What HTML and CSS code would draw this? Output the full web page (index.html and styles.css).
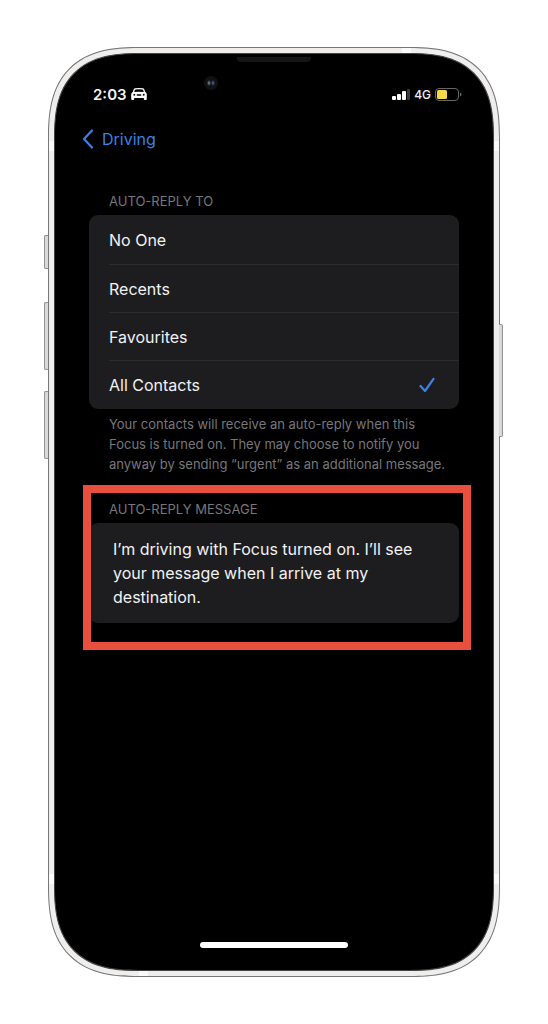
FILE: index.html
```html
<!DOCTYPE html>
<html lang="en">
<head>
    <meta charset="UTF-8">
    <meta name="viewport" content="width=device-width, initial-scale=1.0">
    <title>Driving Focus: Auto-Reply</title>
    <link rel="stylesheet" href="styles.css">
</head>
<body>
    <div class="phone">
        <span class="side-button mute"></span>
        <span class="side-button volume-up"></span>
        <span class="side-button volume-down"></span>
        <span class="side-button power"></span>
        <span class="band band-top"></span>
        <span class="band band-bottom"></span>
        <span class="band band-left-top"></span>
        <span class="band band-left-bottom"></span>
        <span class="band band-right-top"></span>
        <span class="band band-right-bottom"></span>

        <div class="screen">
            <span class="speaker"></span>
            <span class="camera"></span>

            <header class="status-bar">
                <div class="status-left">
                    <span class="time">2:03</span>
                    <svg class="car" width="16" height="14" viewBox="0 0 16 14">
                        <path fill="#fff" fill-rule="evenodd" d="M4.2 1.2 Q8 0.6 11.8 1.2 Q12.8 1.4 13.2 2.3 L14.3 5 Q15.8 5.8 15.8 7.4 V12 Q15.8 12.9 14.8 12.9 H13.8 Q12.8 12.9 12.8 12 V11 H3.2 V12 Q3.2 12.9 2.2 12.9 H1.2 Q0.2 12.9 0.2 12 V7.4 Q0.2 5.8 1.7 5 L2.8 2.3 Q3.2 1.4 4.2 1.2 Z M4.7 2.5 Q4.1 2.6 3.9 3.1 L3.2 4.9 Q8 4.4 12.8 4.9 L12.1 3.1 Q11.9 2.6 11.3 2.5 Q8 2.1 4.7 2.5 Z M3.3 6.8 A1 1 0 1 0 3.3 8.8 A1 1 0 1 0 3.3 6.8 Z M12.7 6.8 A1 1 0 1 0 12.7 8.8 A1 1 0 1 0 12.7 6.8 Z M6.3 7.2 Q5.6 7.2 5.6 7.9 Q5.6 8.7 6.3 8.7 H9.7 Q10.4 8.7 10.4 7.9 Q10.4 7.2 9.7 7.2 Z"/>
                    </svg>
                </div>
                <div class="status-right">
                    <svg width="18" height="11" viewBox="0 0 18 11">
                        <rect x="0" y="7" width="4" height="4" rx="1" fill="#fff"/>
                        <rect x="5" y="5" width="4" height="6" rx="1" fill="#fff"/>
                        <rect x="10" y="2" width="4" height="9" rx="1" fill="#fff"/>
                        <rect x="15" y="0" width="3" height="11" rx="1" fill="#3c3c3e"/>
                    </svg>
                    <span class="network">4G</span>
                    <svg width="27" height="13" viewBox="0 0 27 13">
                        <rect x="0.5" y="0.5" width="23" height="12" rx="3.5" fill="none" stroke="#67676a"/>
                        <rect x="2" y="2" width="10" height="9" rx="1.5" fill="#f6d748"/>
                        <path d="M25 4.5 Q26.5 5.2 26.5 6.5 Q26.5 7.8 25 8.5 Z" fill="#67676a"/>
                    </svg>
                </div>
            </header>

            <nav class="nav-bar">
                <a class="back" href="#">
                    <svg width="12" height="20" viewBox="0 0 12 20">
                        <path d="M10 1.5 L2 10 L10 18.5" fill="none" stroke="currentColor" stroke-width="2.2" stroke-linecap="round" stroke-linejoin="round"/>
                    </svg>
                    <span>Driving</span>
                </a>
            </nav>

            <main class="settings">
                <section class="group">
                    <h2 class="group-title" id="reply-to">AUTO-REPLY TO</h2>
                    <div class="options" role="radiogroup" aria-labelledby="reply-to">
                        <label class="option">
                            <span>No One</span>
                            <input type="radio" name="reply-to" value="none">
                        </label>
                        <label class="option">
                            <span>Recents</span>
                            <input type="radio" name="reply-to" value="recents">
                        </label>
                        <label class="option">
                            <span>Favourites</span>
                            <input type="radio" name="reply-to" value="favourites">
                        </label>
                        <label class="option">
                            <span>All Contacts</span>
                            <input type="radio" name="reply-to" value="all" checked>
                            <svg class="check" width="16" height="16" viewBox="0 0 16 16">
                                <path d="M1.5 9 L6 14 L14.5 1.8" fill="none" stroke="currentColor" stroke-width="2.2" stroke-linecap="round" stroke-linejoin="round"/>
                            </svg>
                        </label>
                    </div>
                    <p class="note">Your contacts will receive an auto-reply when this Focus is turned on. They may choose to notify you anyway by sending “urgent” as an additional message.</p>
                </section>

                <section class="group highlighted">
                    <label class="group-title" for="message">AUTO-REPLY MESSAGE</label>
                    <textarea class="message" id="message" rows="3">I’m driving with Focus turned on. I’ll see your message when I arrive at my destination.</textarea>
                </section>
            </main>

            <span class="home-bar"></span>
        </div>
    </div>
</body>
</html>
```

FILE: styles.css
```css
* {
    box-sizing: border-box;
}

body {
    display: flex;
    min-height: 100vh;
    margin: 0;
    padding: 47px 48px;
    background-color: #fff;
    color: #f2f2f3;
    font-family: Inter, "Liberation Sans", sans-serif;
    font-size: 16px;
}

/* Phone body */
.phone {
    position: relative;
    display: flex;
    flex: 1;
    max-width: 480px;
    margin: 0 auto;
    padding: 5px;
    border: 1px solid #77777a;
    border-radius: 76px;
    background-color: #efeeec;
}

.screen {
    position: relative;
    display: flex;
    flex: 1;
    flex-direction: column;
    padding: 28px 34px 22px;
    border: 1px solid #444;
    border-radius: 70px;
    background-color: #000;
}

@supports (corner-shape: superellipse(1.4)) {
    .phone {
        border-radius: 92px;
        corner-shape: superellipse(1.4);
    }

    .screen {
        border-radius: 86px;
        corner-shape: superellipse(1.4);
    }
}

.side-button {
    position: absolute;
    left: -5px;
    width: 4px;
    border: 1px solid #929294;
    border-right: none;
    border-radius: 2px 0 0 2px;
    background-color: #d9d9db;
}

.mute {
    top: 187px;
    height: 34px;
}

.volume-up {
    top: 254px;
    height: 68px;
}

.volume-down {
    top: 343px;
    height: 68px;
}

.power {
    top: 276px;
    right: -4px;
    left: auto;
    height: 113px;
    border: 1px solid #929294;
    border-left: none;
    border-radius: 0 2px 2px 0;
}

.band {
    position: absolute;
    width: 5px;
    height: 10px;
    background-color: #fafafa;
}

.band-top,
.band-bottom {
    width: 9px;
    height: 5px;
}

.band-top {
    top: 0;
    right: 88px;
}

.band-bottom {
    bottom: 0;
    left: 90px;
}

.band-left-top {
    top: 93px;
    left: 0;
}

.band-left-bottom {
    bottom: 92px;
    left: 0;
}

.band-right-top {
    top: 93px;
    right: 0;
}

.band-right-bottom {
    right: 0;
    bottom: 92px;
}

.speaker {
    position: absolute;
    top: 3px;
    left: 50%;
    width: 74px;
    height: 5px;
    border-radius: 0 0 4px 4px;
    background-color: #151515;
    transform: translateX(-50%);
}

.camera {
    position: absolute;
    top: 22px;
    left: 34%;
    width: 14px;
    height: 14px;
    border-radius: 50%;
    background:
        radial-gradient(ellipse 2px 3px at 5px 7px, #7d98a2, transparent),
        radial-gradient(ellipse 2px 3px at 9px 7px, #5a6cb4, transparent),
        #101113;
}

/* Status bar */
.status-bar,
.status-left,
.status-right {
    display: flex;
    align-items: center;
}

.status-bar {
    justify-content: space-between;
    height: 24px;
    margin-right: -3px;
    padding-left: 4px;
}

.status-left {
    gap: 4px;
}

.status-right {
    gap: 4px;
}

.time {
    font-size: 15px;
    font-weight: 600;
}

.network {
    font-size: 12px;
    font-weight: 500;
}

/* Navigation */
.nav-bar {
    margin: 20px 0 0 -7px;
}

.back {
    display: inline-flex;
    align-items: center;
    gap: 8px;
    height: 26px;
    color: #3b82e6;
    text-decoration: none;
}

/* Settings groups */
.settings {
    flex: 1;
    padding-top: 39px;
}

.group-title {
    display: block;
    margin: 0;
    padding: 0 20px 5px;
    color: #77777b;
    font-size: 13px;
    font-weight: 400;
    line-height: 18px;
}

.options {
    padding: 1px 0;
    border-radius: 9px;
    background-color: #1d1d1f;
}

.option {
    display: flex;
    align-items: center;
    justify-content: space-between;
    height: 48px;
    margin-left: 20px;
    padding-right: 24px;
    cursor: pointer;
}

.option + .option {
    border-top: 1px solid #2c2c2e;
}

.option input {
    position: absolute;
    opacity: 0;
}

.check {
    color: #3b82e6;
}

.note {
    margin: 0;
    padding: 5px 8px 0 20px;
    color: #77777b;
    font-size: 13px;
    line-height: 20px;
}

.highlighted {
    position: relative;
    margin-top: 26px;
}

/* Frame drawn over the message group */
.highlighted::after {
    position: absolute;
    inset: -15px -12px -27px -6px;
    border: 8px solid #e94f3d;
    content: "";
    pointer-events: none;
}

.message {
    display: block;
    width: 100%;
    padding: 14px 24px;
    border: none;
    border-radius: 9px;
    outline: none;
    background-color: #1d1d1f;
    color: inherit;
    font: inherit;
    line-height: 24px;
    overflow: hidden;
    resize: none;
}

.home-bar {
    align-self: center;
    width: 40%;
    height: 6px;
    border-radius: 3px;
    background-color: #fff;
}
```
